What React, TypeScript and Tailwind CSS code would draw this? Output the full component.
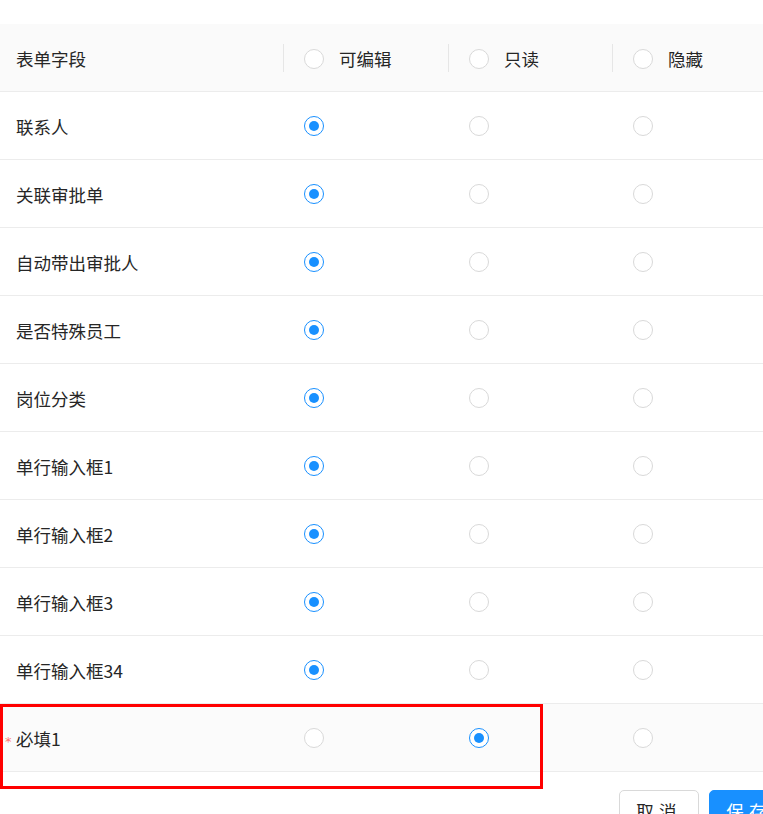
import React from "react";

const rows: { name: string; sel: number; required?: boolean; hover?: boolean }[] = [
  { name: "联系人", sel: 0 },
  { name: "关联审批单", sel: 0 },
  { name: "自动带出审批人", sel: 0 },
  { name: "是否特殊员工", sel: 0 },
  { name: "岗位分类", sel: 0 },
  { name: "单行输入框1", sel: 0 },
  { name: "单行输入框2", sel: 0 },
  { name: "单行输入框3", sel: 0 },
  { name: "单行输入框34", sel: 0 },
  { name: "必填1", sel: 1, required: true, hover: true },
];

function Radio({ checked }: { checked: boolean }) {
  return (
    <span
      className={
        "flex h-[20px] w-[20px] shrink-0 items-center justify-center rounded-full border bg-white " +
        (checked ? "border-[#1890ff]" : "border-[#d9d9d9]")
      }
    >
      {checked && <span className="h-[10px] w-[10px] rounded-full bg-[#1890ff]" />}
    </span>
  );
}

const grid = "grid grid-cols-[283px_165px_164px_165px]";

export default function App() {
  return (
    <div
      className="relative h-[814px] w-[763px] overflow-hidden bg-white text-[17.5px] text-[#262626]"
      style={{ fontFamily: '"Noto Sans CJK SC", "Noto Sans", sans-serif' }}
    >
      <div className="w-[790px] pt-[24px]">
        {/* header */}
        <div className={grid + " h-[68px] border-b border-[#ececec] bg-[#fafafa]"}>
          <div className="flex items-center pl-4 pt-[3px]">表单字段</div>
          {["可编辑", "只读", "隐藏"].map((t) => (
            <div key={t} className="flex items-center">
              <span className="h-[28px] w-px bg-[#e6e6e6]" />
              <span className="ml-[20px] mt-[2px]">
                <Radio checked={false} />
              </span>
              <span className="ml-[15px] pt-[3px]">{t}</span>
            </div>
          ))}
        </div>
        {/* body */}
        {rows.map((r) => (
          <div
            key={r.name}
            className={grid + " h-[68px] border-b border-[#ececec] " + (r.hover ? "bg-[#fbfbfb]" : "bg-white")}
          >
            <div className="flex items-center pl-4 pt-[3px]">
              {r.required && (
                <span
                  className="-ml-[11px] mr-[3px] mt-[4px] w-[8px] text-[13px] leading-none text-[#ff7875]"
                  style={{ fontFamily: '"DejaVu Sans", sans-serif' }}
                >
                  *
                </span>
              )}
              {r.name}
            </div>
            {[0, 1, 2].map((i) => (
              <div key={i} className="flex items-center pl-[21px] pt-[1px]">
                <Radio checked={r.sel === i} />
              </div>
            ))}
          </div>
        ))}
        {/* footer buttons */}
        <div className="flex justify-end gap-[10px] pr-[1px] pt-[18px]">
          <button className="h-[40px] w-[80px] rounded-[5px] border border-[#d9d9d9] bg-white pt-[2px] text-[17.5px] tracking-[0.3em] text-[#262626]">
            取消
          </button>
          <button className="h-[40px] w-[80px] rounded-[5px] border border-[#1890ff] bg-[#1890ff] pt-[2px] text-[17.5px] tracking-[0.3em] text-white">
            保存
          </button>
        </div>
      </div>
      {/* highlight box */}
      <div className="pointer-events-none absolute left-0 top-[704px] h-[85px] w-[543px] border-[3px] border-[#ff0000]" />
    </div>
  );
}
